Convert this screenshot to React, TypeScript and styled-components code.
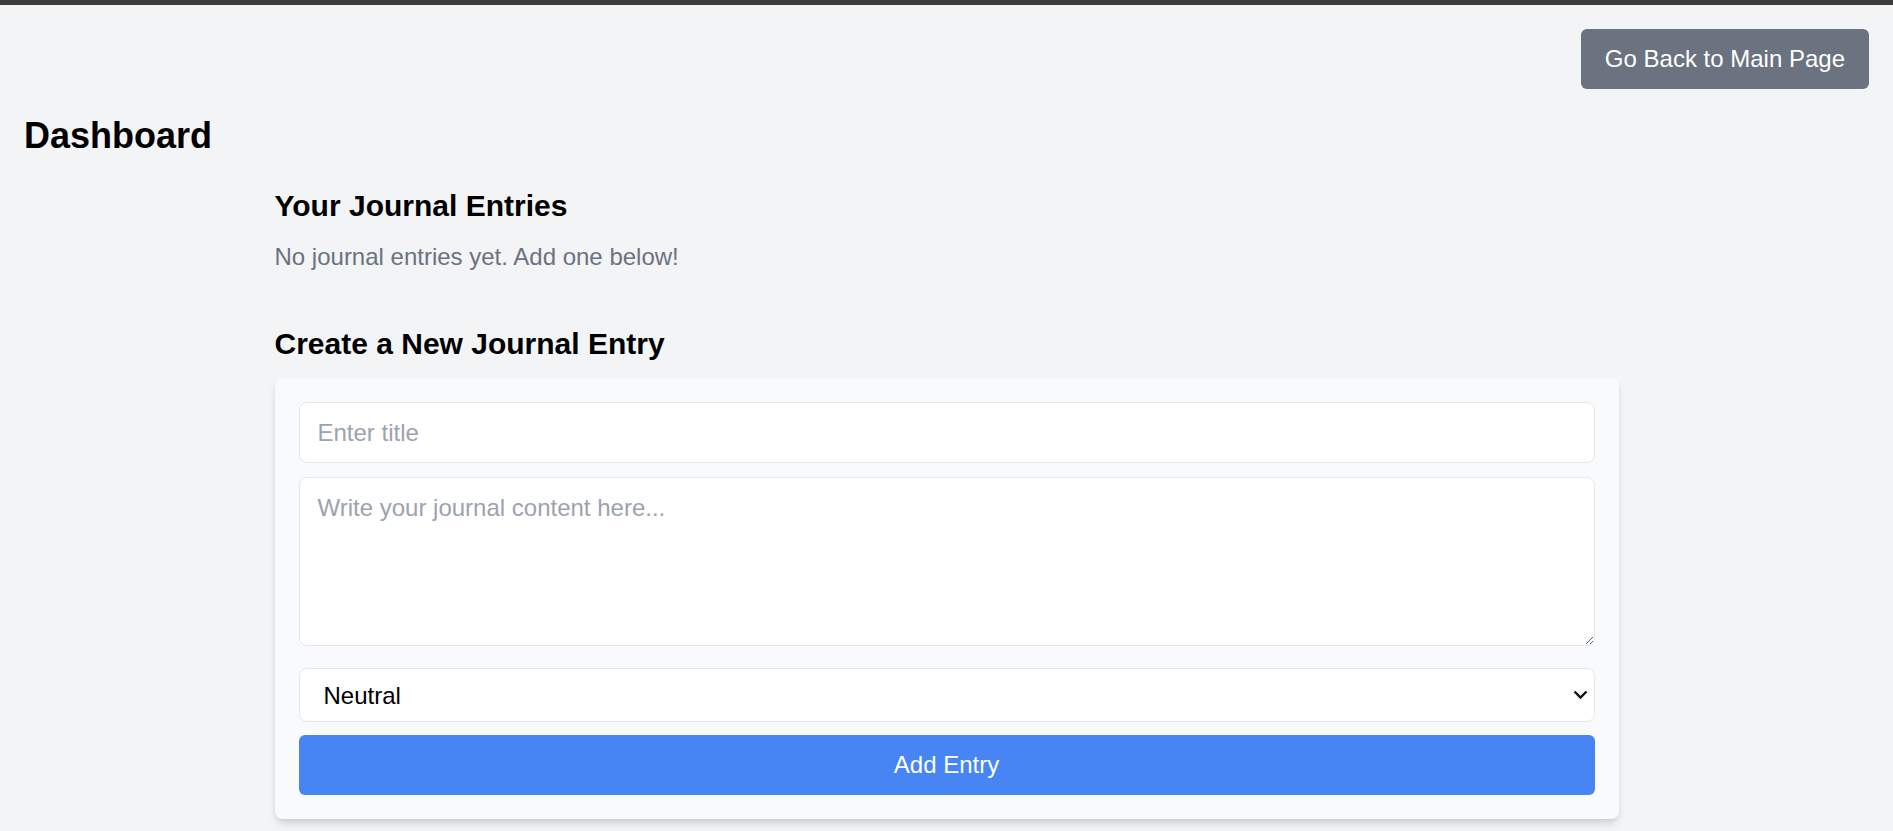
import React from "react";
import styled, { createGlobalStyle } from "styled-components";

const GlobalStyle = createGlobalStyle`
  * { box-sizing: border-box; }
  html, body { margin: 0; padding: 0; }
  body {
    background: #f3f4f6;
    font-family: "Liberation Sans", Arial, sans-serif;
    color: #000;
  }
`;

const TopBar = styled.div`
  height: 5px;
  background: #3c3c3c;
`;

const Page = styled.div`
  padding: 24px;
  min-height: 826px;
`;

const Header = styled.div`
  display: flex;
  justify-content: flex-end;
  margin-bottom: 23px;
`;

const GrayButton = styled.button`
  background: #6b7280;
  color: #fff;
  border: none;
  border-radius: 6px;
  padding: 12px 24px;
  font-family: "Liberation Sans", Arial, sans-serif;
  font-size: 24px;
  line-height: 36px;
  cursor: pointer;
`;

const Title = styled.h1`
  margin: 0;
  font-size: 36px;
  line-height: 48px;
  font-weight: 700;
`;

const Container = styled.div`
  max-width: 1344px;
  margin: 25px auto 0;
`;

const SectionTitle = styled.h2<{ $mb: number }>`
  margin: 0 0 ${(p) => p.$mb}px;
  font-size: 30px;
  line-height: 42px;
  font-weight: 700;
`;

const Empty = styled.p`
  margin: 0 0 48px;
  font-size: 24px;
  line-height: 36px;
  color: #6b7280;
`;

const Card = styled.form`
  background: #f9fafb;
  border-radius: 8px;
  padding: 24px;
  box-shadow: 0 6px 9px -1px rgba(0, 0, 0, 0.1), 0 3px 6px -2px rgba(0, 0, 0, 0.1);
  display: flex;
  flex-direction: column;
`;

const fieldBase = `
  width: 100%;
  background: #fff;
  border: 1px solid #e5e7eb;
  border-radius: 8px;
  font-family: "Liberation Sans", Arial, sans-serif;
  font-size: 24px;
  color: #000;
  outline: none;
  &::placeholder { color: #9ca3af; }
`;

const TitleInput = styled.input`
  ${fieldBase}
  height: 61px;
  padding: 0 18px;
  margin-bottom: 14px;
`;

const ContentArea = styled.textarea`
  ${fieldBase}
  display: block;
  height: 169px;
  padding: 12px 18px;
  line-height: 36px;
  resize: vertical;
  margin-bottom: 22px;
`;

const SelectWrap = styled.div`
  position: relative;
  margin-bottom: 13px;
`;

const MoodSelect = styled.select`
  ${fieldBase}
  height: 54px;
  padding: 0 40px 0 24px;
  appearance: none;
  -webkit-appearance: none;
`;

const Chevron = styled.svg`
  position: absolute;
  right: 7px;
  top: 50%;
  transform: translateY(-50%);
  pointer-events: none;
`;

const AddButton = styled.button`
  height: 60px;
  width: 100%;
  background: #4785f4;
  color: #fff;
  border: none;
  border-radius: 6px;
  font-family: "Liberation Sans", Arial, sans-serif;
  font-size: 24px;
  cursor: pointer;
`;

export default function App() {
  return (
    <>
      <GlobalStyle />
      <TopBar />
      <Page>
        <Header>
          <GrayButton>Go Back to Main Page</GrayButton>
        </Header>
        <Title>Dashboard</Title>
        <Container>
          <SectionTitle $mb={12}>Your Journal Entries</SectionTitle>
          <Empty>No journal entries yet. Add one below!</Empty>
          <SectionTitle $mb={13}>Create a New Journal Entry</SectionTitle>
          <Card onSubmit={(e) => e.preventDefault()}>
            <TitleInput placeholder="Enter title" />
            <ContentArea placeholder="Write your journal content here..." />
            <SelectWrap>
              <MoodSelect defaultValue="Neutral">
                <option>Happy</option>
                <option>Neutral</option>
                <option>Sad</option>
              </MoodSelect>
              <Chevron width="15" height="10" viewBox="0 0 15 10">
                <polyline
                  points="1.5,1.5 7.5,7.5 13.5,1.5"
                  fill="none"
                  stroke="#111"
                  strokeWidth="2.4"
                />
              </Chevron>
            </SelectWrap>
            <AddButton type="submit">Add Entry</AddButton>
          </Card>
        </Container>
      </Page>
    </>
  );
}
